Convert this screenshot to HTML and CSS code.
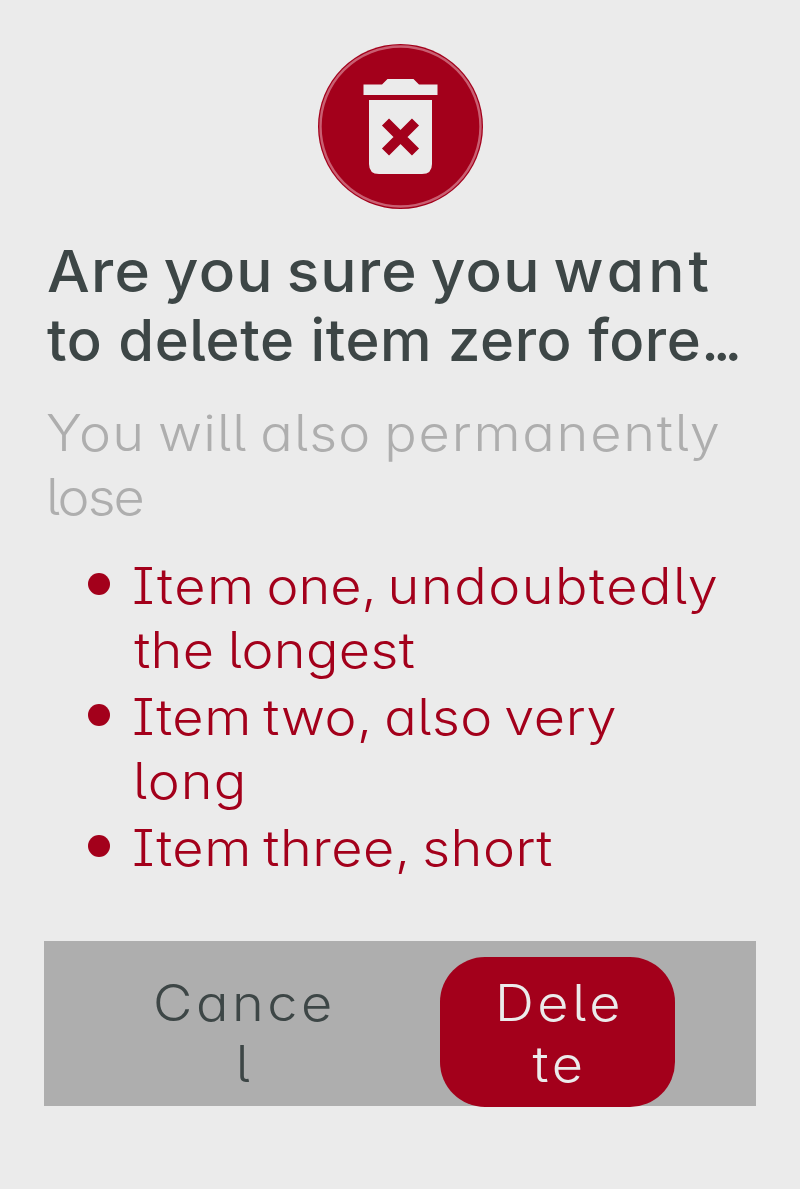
FILE: index.html
```html
<!DOCTYPE html>
<html lang="en">
<head>
<meta charset="utf-8">
<title>Delete item</title>
<link rel="stylesheet" href="styles.css">
</head>
<body>
<main class="dialog">
  <svg class="badge" viewBox="0 0 165 165" aria-hidden="true">
    <circle class="badge-disc" cx="82.5" cy="82.5" r="82.5"/>
    <circle class="badge-ring" cx="82.5" cy="82.5" r="80"/>
    <path class="badge-bin" d="M45.500 40.500h18.500l5.500-5.500h26l5.500 5.500h18.500v10.500h-74zM51 56h63v64q0 10-10 10h-43q-10 0-10-10z"/>
    <path class="badge-cross" d="M67.500 78l30 30M97.500 78l-30 30"/>
  </svg>
  <h1 class="title"><span class="line t1">Are you sure you <span class="wide">want</span></span><span class="line t2">to delete item zero fore<span class="dots">...</span></span></h1>
  <p class="note"><span class="line n1">You will also <span class="open">permanently</span></span><span class="line n2">lose</span></p>
  <ul class="losses">
    <li class="loss"><span class="line a1">Item <span class="tight">one,</span> undoubtedly</span><span class="line a2">the longest</span></li>
    <li class="loss"><span class="line b1">Item two, also very</span><span class="line b2">long</span></li>
    <li class="loss"><span class="line c1">Item three, short</span></li>
  </ul>
  <footer class="actions">
    <button class="button cancel"><span class="line">Cance</span><span class="line">l</span></button>
    <button class="button delete"><span class="line">Dele</span><span class="line">te</span></button>
  </footer>
</main>
</body>
</html>
```
FILE: styles.css
```css
* { box-sizing: border-box; }
body {
  margin: 0;
  background: #ebebeb;
  font-family: Inter, "Open Sans", sans-serif;
  font-feature-settings: "cv11", "cv05", "cv08";
}
.dialog {
  display: flex;
  flex-direction: column;
  height: 1189px;
  padding: 44px;
}
.badge { width: 165px; height: 165px; align-self: center; }
.badge-disc { fill: #a3001b; }
.badge-ring { fill: none; stroke: #c95f72; stroke-width: 2.4; }
.badge-bin { fill: #ebebeb; }
.badge-cross { stroke: #a3001b; stroke-width: 10; }
.line {
  display: block;
  white-space: nowrap;
  transform: scaleX(1.08);
  transform-origin: left;
}
.title {
  margin: 28px 0 0;
  padding-left: 3px;
  color: #3d4646;
  font-size: 58px;
  font-weight: 500;
  line-height: 69px;
}
.t1 { letter-spacing: 1.2px; word-spacing: -4.4px; transform: scaleX(1.04); }
.wide { letter-spacing: 4px; }
.t2 { letter-spacing: 0.55px; transform: none; }
.dots { letter-spacing: -6px; }
.note {
  margin: 26px 0 0;
  padding-left: 2px;
  color: #aeaeae;
  font-size: 50px;
  font-weight: 300;
  line-height: 64px;
}
.n1 { letter-spacing: 1.1px; word-spacing: -3.3px; }
.open { letter-spacing: 1.65px; }
.n2 { letter-spacing: -1.8px; }
.losses {
  display: flex;
  flex-direction: column;
  gap: 3px;
  margin: 25px 0 0;
  padding: 0 0 0 44px;
  list-style: none;
  color: #a3001b;
  font-size: 50px;
  font-weight: 300;
  line-height: 64px;
}
.loss { display: grid; grid-template-columns: 22px 1fr; column-gap: 22px; }
.loss::before {
  content: "";
  grid-row: 1 / span 2;
  width: 22px;
  height: 22px;
  margin-top: 19px;
  border-radius: 50%;
  background: currentColor;
}
.loss .line { grid-column: 2; }
.a1 { letter-spacing: 1.4px; word-spacing: -5.5px; }
.tight { letter-spacing: 0; }
.a2 { padding-left: 2px; letter-spacing: 0.3px; word-spacing: -2px; }
.b1 { letter-spacing: 0.5px; word-spacing: -4px; }
.b2 { padding-left: 1px; letter-spacing: 1px; }
.c1 { letter-spacing: 0.5px; word-spacing: -4px; }
.actions {
  display: flex;
  height: 165px;
  margin-top: 61px;
  padding: 16px 81px 0 81px;
  justify-content: space-between;
  background: #aeaeae;
}
.button {
  width: 235px;
  height: 150px;
  padding: 16px 0 12px 4px;
  border: 0;
  border-radius: 45px;
  background: none;
  color: #3d4646;
  font: inherit;
  font-size: 50px;
  font-weight: 300;
  line-height: 61px;
  letter-spacing: 3.3px;
  text-align: center;
}
.button .line { transform-origin: center; }
.delete { background: #a3001b; color: #ebebeb; }
```
